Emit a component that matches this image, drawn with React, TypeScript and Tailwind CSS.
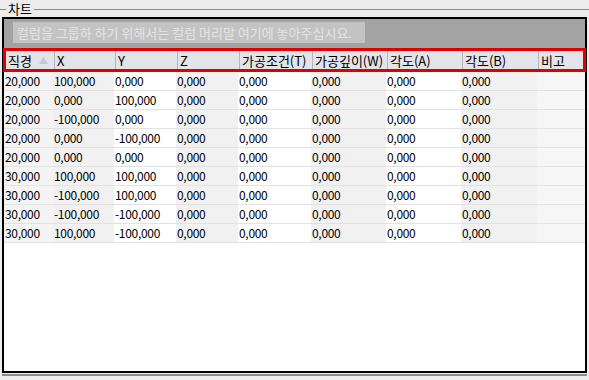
import React from "react";

const cols = [
  { label: "직경", w: "w-[49px]", sort: true, shade: "bg-[#f4f4f4]" },
  { label: "X", w: "w-[61px]", shade: "bg-[#f1f1f1]" },
  { label: "Y", w: "w-[62px]", shade: "bg-white" },
  { label: "Z", w: "w-[62px]", shade: "bg-[#f1f1f1]" },
  { label: "가공조건(T)", w: "w-[73px]", shade: "bg-white" },
  { label: "가공깊이(W)", w: "w-[75px]", shade: "bg-[#f1f1f1]" },
  { label: "각도(A)", w: "w-[75px]", shade: "bg-white" },
  { label: "각도(B)", w: "w-[76px]", shade: "bg-[#f1f1f1]" },
  { label: "비고", w: "flex-1", shade: "bg-[#f6f6f6]" },
];

const rows = [
  ["20,000", "100,000", "0,000"],
  ["20,000", "0,000", "100,000"],
  ["20,000", "-100,000", "0,000"],
  ["20,000", "0,000", "-100,000"],
  ["20,000", "0,000", "0,000"],
  ["30,000", "100,000", "100,000"],
  ["30,000", "-100,000", "100,000"],
  ["30,000", "-100,000", "-100,000"],
  ["30,000", "100,000", "-100,000"],
];

export default function App() {
  return (
    <div className="w-[589px] h-[380px] bg-[#ededed] relative overflow-hidden text-[12px] leading-none text-black [font-family:'Noto_Sans_CJK_KR','DejaVu_Sans',sans-serif]">
      {/* group box caption */}
      <div className="h-[17px] flex items-center">
        <div className="w-[6px] border-t border-[#8a8a8a] mt-[1px]" />
        <span className="px-[2px] text-[13px]">차트</span>
        <div className="flex-1 border-t border-[#8a8a8a] mt-[1px]" />
      </div>

      <div className="mx-[2px] h-[356px] border-2 border-black flex flex-col bg-white">
        {/* group by panel */}
        <div className="h-[29px] bg-[#a3a3a3] pl-[9px] pt-[3px]">
          <div className="inline-flex items-center h-[21px] w-[352px] bg-[#c3c3c3] px-[4px] text-[13px] whitespace-nowrap text-[#e4e4e4]">
            컬럼을 그룹하 하기 위해서는 컬럼 머리말 여기에 놓아주십시요.
          </div>
        </div>

        {/* header */}
        <div className="h-[24px] border-[3px] border-[#e00000] -mx-[1px] flex bg-[#e3e3ea]">
          {cols.map((c, i) => (
            <div
              key={c.label}
              className={`${c.w} flex items-center pl-[2px] text-[13px] whitespace-nowrap ${i < cols.length - 1 ? "border-r border-[#b4b4bc]" : ""}`}
            >
              {c.label}
              {c.sort && <span className="ml-[7px] text-[9px] text-[#c8c8d0]">▲</span>}
            </div>
          ))}
        </div>

        {/* rows */}
        {rows.map((r, ri) => (
          <div key={ri} className="h-[19px] flex border-b border-[#e2e2e2]">
            {cols.map((c, ci) => {
              let v = "";
              if (ci < 3) v = r[ci];
              else if (ci < 8) v = "0,000";
              return (
                <div key={ci} className={`${c.w} ${c.shade} flex items-center pl-[1px] tracking-tight`}>
                  {v}
                </div>
              );
            })}
          </div>
        ))}
        <div className="flex-1 bg-white" />
      </div>
      <div className="mx-[2px] mt-[1px] h-[2px] bg-[#8c8c8c]" />
    </div>
  );
}
